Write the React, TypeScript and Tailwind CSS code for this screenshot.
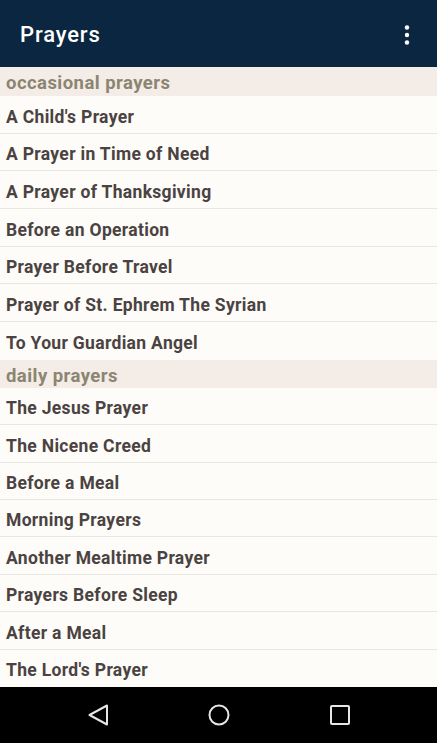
import React from "react";

const occasional = [
  "A Child's Prayer",
  "A Prayer in Time of Need",
  "A Prayer of Thanksgiving",
  "Before an Operation",
  "Prayer Before Travel",
  "Prayer of St. Ephrem The Syrian",
  "To Your Guardian Angel",
];

const daily = [
  "The Jesus Prayer",
  "The Nicene Creed",
  "Before a Meal",
  "Morning Prayers",
  "Another Mealtime Prayer",
  "Prayers Before Sleep",
  "After a Meal",
  "The Lord's Prayer",
];

function Section({
  title,
  items,
  headClass,
  rowClass,
}: {
  title: string;
  items: string[];
  headClass: string;
  rowClass: string;
}) {
  return (
    <div className="flex flex-col">
      <div
        className={
          "flex items-center px-[6px] pt-[4px] bg-[#f4ece7] text-[#8b8571] text-[18.5px] tracking-[0.45px] font-bold leading-none " +
          headClass
        }
      >
        {title}
      </div>
      {items.map((t, i) => (
        <div
          key={t}
          className={
            "flex items-center px-[6px] pt-[6px] bg-[#fdfcf8] text-[#4b4242] text-[17.5px] tracking-[0.32px] font-bold leading-none " +
            rowClass +
            (i < items.length - 1 ? " border-b border-[#e9e7e2]" : "")
          }
        >
          {t}
        </div>
      ))}
    </div>
  );
}

export default function App() {
  return (
    <div
      className="w-[437px] h-[743px] flex flex-col overflow-hidden bg-[#fdfcf8]"
      style={{ fontFamily: "Roboto, 'Noto Sans', sans-serif" }}
    >
      <div className="h-[67px] shrink-0 bg-[#0a2640] flex items-center justify-between pl-[20px] pr-[27px] pt-[2px] shadow-[0_1px_2px_rgba(0,0,0,0.3)]">
        <span className="text-white text-[22px] tracking-[0.85px] font-medium leading-none">Prayers</span>
        <svg width="6" height="20" viewBox="0 0 6 20">
          <circle cx="3" cy="2.5" r="2.2" fill="white" />
          <circle cx="3" cy="10" r="2.2" fill="white" />
          <circle cx="3" cy="17.5" r="2.2" fill="white" />
        </svg>
      </div>
      <div className="flex-1 flex flex-col overflow-hidden">
        <Section title="occasional prayers" items={occasional} headClass="h-[29px]" rowClass="h-[37.7px]" />
        <Section title="daily prayers" items={daily} headClass="h-[28px]" rowClass="h-[37.4px]" />
      </div>
      <div className="h-[56px] shrink-0 bg-black flex items-center justify-center gap-[99px]">
        <svg width="22" height="22" viewBox="0 0 22 22">
          <path d="M20 1.5 L20 20.5 L2.5 11 Z" fill="none" stroke="#e6e6e6" strokeWidth="2" strokeLinejoin="round" />
        </svg>
        <svg width="22" height="22" viewBox="0 0 22 22">
          <circle cx="11" cy="11" r="9.5" fill="none" stroke="#e6e6e6" strokeWidth="2" />
        </svg>
        <svg width="22" height="22" viewBox="0 0 22 22">
          <rect x="2" y="2" width="18" height="18" rx="1" fill="none" stroke="#e6e6e6" strokeWidth="2" />
        </svg>
      </div>
    </div>
  );
}
